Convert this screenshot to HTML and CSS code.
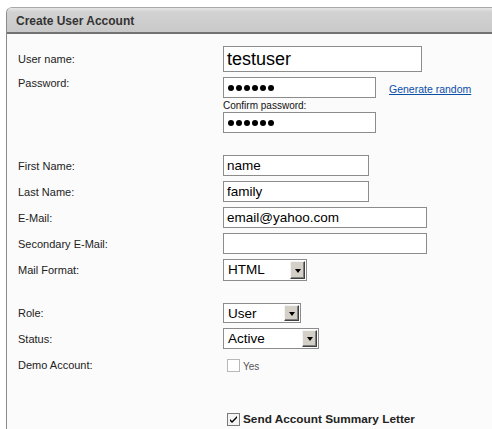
FILE: index.html
```html
<!DOCTYPE html>
<html>
<head>
<meta charset="utf-8">
<link rel="stylesheet" href="styles.css">
</head>
<body>
<div class="panel">
  <div class="header">Create User Account</div>
  <div class="form">
    <div class="row">
      <div class="label">User name:</div>
      <div class="input big w199">testuser</div>
    </div>
    <div class="row top">
      <div class="label pass-label">Password:</div>
      <div class="field-col">
        <div class="inline">
          <div class="input w153 pw"><span class="dot"></span><span class="dot"></span><span class="dot"></span><span class="dot"></span><span class="dot"></span><span class="dot"></span></div>
          <a class="link" href="#">Generate random</a>
        </div>
        <div class="sublabel">Confirm password:</div>
        <div class="input w153 pw"><span class="dot"></span><span class="dot"></span><span class="dot"></span><span class="dot"></span><span class="dot"></span><span class="dot"></span></div>
      </div>
    </div>
    <div class="row gap">
      <div class="label">First Name:</div>
      <div class="input w146">name</div>
    </div>
    <div class="row">
      <div class="label">Last Name:</div>
      <div class="input w146">family</div>
    </div>
    <div class="row">
      <div class="label">E-Mail:</div>
      <div class="input w204">email@yahoo.com</div>
    </div>
    <div class="row">
      <div class="label">Secondary E-Mail:</div>
      <div class="input w204"></div>
    </div>
    <div class="row">
      <div class="label">Mail Format:</div>
      <div class="select s-mail"><span class="val">HTML</span><span class="btn"><span class="arrow"></span></span></div>
    </div>
    <div class="row gap">
      <div class="label">Role:</div>
      <div class="select s-role"><span class="val">User</span><span class="btn"><span class="arrow"></span></span></div>
    </div>
    <div class="row">
      <div class="label">Status:</div>
      <div class="select s-status"><span class="val">Active</span><span class="btn"><span class="arrow"></span></span></div>
    </div>
    <div class="row demo">
      <div class="label">Demo Account:</div>
      <div class="check-wrap"><span class="cb"></span><span class="yes">Yes</span></div>
    </div>
    <div class="row send">
      <div class="label"></div>
      <div class="check-wrap"><span class="cb checked"><svg width="11" height="11" viewBox="0 0 11 11"><path d="M2 5 L4 7 L9 2 L9 4 L4 9 L2 7 Z" fill="#000"/></svg></span><span class="send-text">Send Account Summary Letter</span></div>
    </div>
  </div>
</div>
</body>
</html>
```
FILE: styles.css
```css
* { box-sizing: border-box; }
html, body { margin: 0; padding: 0; background: #fff; overflow: hidden; }
body { width: 492px; height: 429px; font-family: "Liberation Sans", Arial, sans-serif; }

.panel {
  margin: 7px 0 0 6px;
  width: 486px;
  height: 422px;
  border-left: 1px solid #8a8a8a;
  border-top: 1px solid #a8a8a8;
  border-top-left-radius: 6px;
  background: #fbfbfb;
  overflow: hidden;
}
.header {
  height: 26px;
  padding: 2px 0 0 9px;
  line-height: 22px;
  font-size: 12px;
  font-weight: bold;
  color: #333;
  background: linear-gradient(#e6e6e6 0, #d2d2d2 4px, #c9c9c9 100%);
  border-bottom: 2px solid #727272;
}
.form {
  padding: 12px 0 0 11px;
  font-size: 11px;
  color: #222;
}
.row {
  display: flex;
  align-items: center;
  margin-bottom: 5px;
}
.row.top { align-items: flex-start; }
.row.gap { margin-top: 22px; }
.row.demo { margin-top: 9px; }
.row.send { margin-top: 40px; }
.label { width: 205px; flex: none; }
.pass-label { line-height: 13px; }

.input {
  height: 21px;
  border: 1px solid #8c8c8c;
  background: #fff;
  padding: 0 3px;
  font-size: 13.5px;
  line-height: 19px;
  color: #000;
  white-space: nowrap;
}
.input.big { height: 26px; font-size: 18px; line-height: 24px; }
.w199 { width: 199px; }
.w153 { width: 153px; }
.w146 { width: 146px; }
.w204 { width: 204px; }

.pw { display: flex; align-items: center; gap: 2px; padding-left: 4px; }
.dot { width: 6px; height: 6px; border-radius: 50%; background: #000; }

.field-col { display: flex; flex-direction: column; }
.inline { display: flex; align-items: center; }
.link {
  margin-left: 13px;
  margin-top: 3px;
  font-size: 10.5px;
  color: #0a4ea8;
  text-decoration: underline;
}
.sublabel {
  height: 14px;
  line-height: 15px;
  font-size: 10px;
  color: #111;
}

.select {
  display: flex;
  height: 22px;
  border: 1px solid #8c8c8c;
  background: #fff;
  padding: 1px;
}
.s-mail { width: 84px; }
.s-role { width: 78px; height: 20px; }
.s-status { width: 96px; height: 21px; }
.select .val {
  flex: 1;
  padding-left: 3px;
  font-size: 13.5px;
  line-height: 18px;
  color: #000;
}
.select .btn {
  width: 15px;
  flex: none;
  display: flex;
  align-items: center;
  justify-content: center;
  background: #d4d0c8;
  border: 1px solid;
  border-color: #f4f4f4 #404040 #404040 #f4f4f4;
  box-shadow: inset -1px -1px 0 #808080;
}
.arrow {
  width: 0;
  height: 0;
  border-top: 4px solid #000;
  border-left: 3.5px solid transparent;
  border-right: 3.5px solid transparent;
  margin-top: 1px;
}

.check-wrap { display: flex; align-items: center; padding-left: 4px; }
.cb {
  width: 13px;
  height: 13px;
  flex: none;
  border: 1px solid #b8b8b8;
  background: #fff;
  display: flex;
  align-items: center;
  justify-content: center;
}
.cb.checked { border-color: #7a7a7a; background: #f4f4f4; }
.yes { margin-left: 3px; margin-top: 3px; font-size: 10px; color: #555; }
.send-text { margin-left: 3px; font-size: 11.8px; font-weight: bold; color: #222; }
```
